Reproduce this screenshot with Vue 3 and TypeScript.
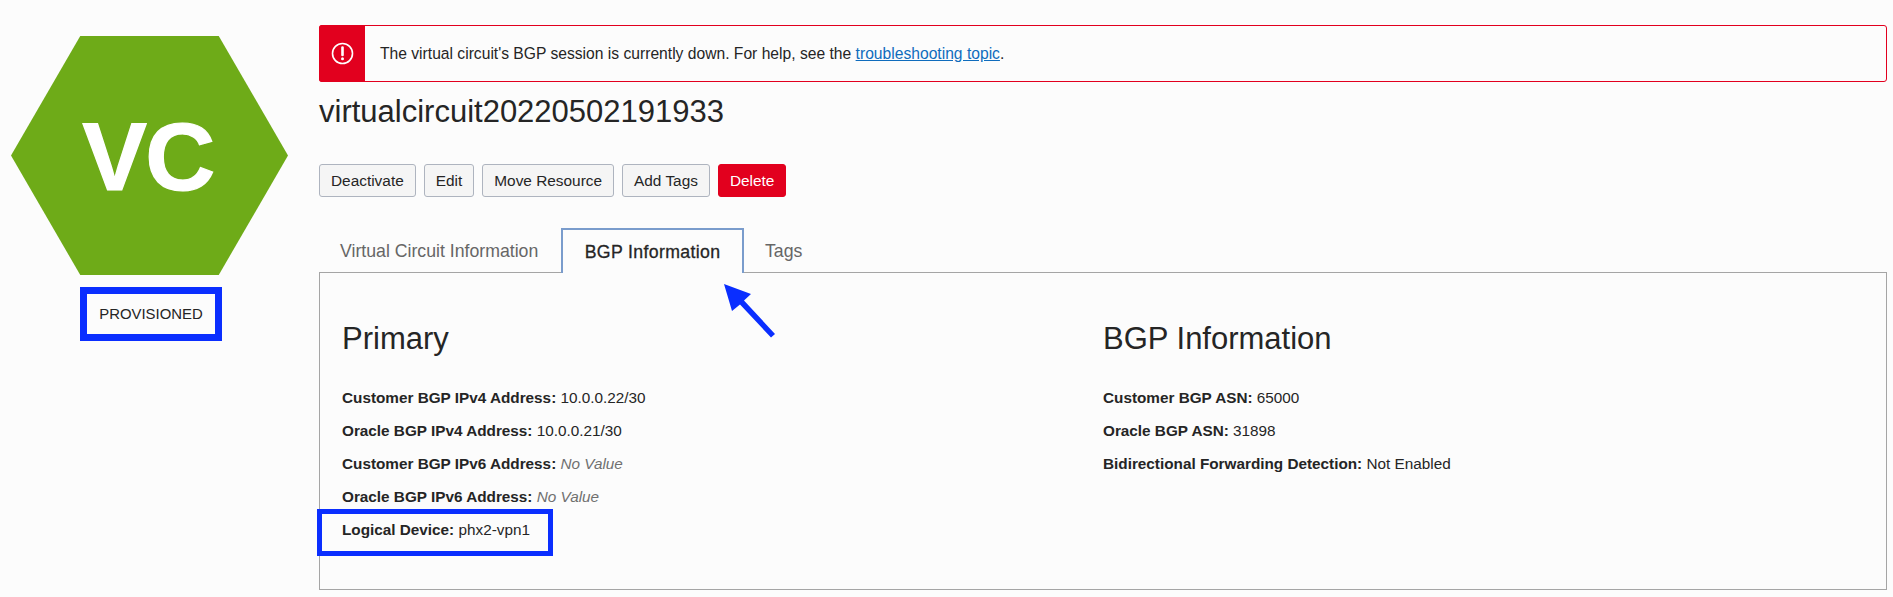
<script setup lang="ts">
interface Row { label: string; value: string; empty?: boolean; mark?: boolean }
const buttons: string[] = ['Deactivate', 'Edit', 'Move Resource', 'Add Tags']
const primary: Row[] = [
  { label: 'Customer BGP IPv4 Address:', value: '10.0.0.22/30' },
  { label: 'Oracle BGP IPv4 Address:', value: '10.0.0.21/30' },
  { label: 'Customer BGP IPv6 Address:', value: 'No Value', empty: true },
  { label: 'Oracle BGP IPv6 Address:', value: 'No Value', empty: true },
  { label: 'Logical Device:', value: 'phx2-vpn1', mark: true },
]
const bgp: Row[] = [
  { label: 'Customer BGP ASN:', value: '65000' },
  { label: 'Oracle BGP ASN:', value: '31898' },
  { label: 'Bidirectional Forwarding Detection:', value: 'Not Enabled' },
]
</script>

<template>
  <div class="page">
    <aside class="side">
      <div class="hex">VC</div>
      <div class="state">PROVISIONED</div>
    </aside>
    <main class="main">
      <div class="alert">
        <div class="alert-icon">
          <svg width="23" height="23" viewBox="0 0 23 23" fill="none">
            <circle cx="11.5" cy="11.5" r="10" stroke="#fff" stroke-width="1.6" />
            <path d="M11.5 5.5v7.5" stroke="#fff" stroke-width="2.6" stroke-linecap="round" />
            <circle cx="11.5" cy="16.8" r="1.5" fill="#fff" />
          </svg>
        </div>
        <p class="alert-text">The virtual circuit's BGP session is currently down. For help, see the <a class="link">troubleshooting topic</a>.</p>
      </div>
      <h1 class="title">virtualcircuit20220502191933</h1>
      <div class="actions">
        <button v-for="b in buttons" :key="b" class="btn">{{ b }}</button>
        <button class="btn danger">Delete</button>
      </div>
      <div class="tabs">
        <div class="tab first">Virtual Circuit Information</div>
        <div class="tab active">BGP Information</div>
        <div class="tab">Tags</div>
      </div>
      <section class="panel">
        <svg class="arrow" width="60" height="60" viewBox="0 0 60 60">
          <path d="M1 1 L28 11 L21 17.5 L52 51 L48 54.500 L17 21.500 L9 28 Z" fill="#0a2eff" />
        </svg>
        <div class="col">
          <h2 class="heading">Primary</h2>
          <div v-for="r in primary" :key="r.label" class="row" :class="{ marked: r.mark }">
            <b class="label">{{ r.label }}</b> <span :class="{ empty: r.empty }">{{ r.value }}</span>
          </div>
        </div>
        <div class="col">
          <h2 class="heading">BGP Information</h2>
          <div v-for="r in bgp" :key="r.label" class="row">
            <b class="label">{{ r.label }}</b> <span>{{ r.value }}</span>
          </div>
        </div>
      </section>
    </main>
  </div>
</template>

<style>
html, body { background: #fcfcfc; }
</style>

<style scoped>
.page {
  display: flex;
  width: 1893px;
  height: 597px;
  overflow: hidden;
  box-sizing: border-box;
  padding-top: 25px;
  background: #fcfcfc;
  color: #252525;
  font-family: "Liberation Sans", Arial, sans-serif;
}
.side {
  width: 319px;
  flex: none;
  display: flex;
  flex-direction: column;
  padding: 11px 0 0 11px;
  box-sizing: border-box;
}
.hex {
  width: 277px;
  height: 239px;
  background: #6eab18;
  clip-path: polygon(25% 0, 75% 0, 100% 50%, 75% 100%, 25% 100%, 0 50%);
  display: flex;
  align-items: center;
  justify-content: center;
  color: #fff;
  font-size: 97px;
  font-weight: 700;
  letter-spacing: -1.5px;
  -webkit-text-stroke: 1.2px #fff;
  padding: 3px 3px 0 0;
  box-sizing: border-box;
}
.state {
  width: 142px;
  height: 54px;
  margin: 12px 0 0 69px;
  border: 7px solid #0a2eff;
  box-sizing: border-box;
  display: flex;
  align-items: center;
  justify-content: center;
  font-size: 14.9px;
}
.main {
  width: 1568px;
  flex: none;
}
.alert {
  height: 57px;
  display: flex;
  align-items: center;
  border: 1px solid #e2001e;
  border-radius: 3px;
  box-sizing: border-box;
}
.alert-icon {
  width: 46px;
  align-self: stretch;
  margin: -1px 0 -1px -1px;
  background: #e2001e;
  border-radius: 3px 0 0 3px;
  display: flex;
  align-items: center;
  justify-content: center;
}
.alert-text {
  margin: 0 0 0 15px;
  font-size: 15.65px;
}
.link {
  color: #0f6cbd;
  text-decoration: underline;
}
.title {
  margin: 10px 0 0;
  font-size: 31px;
  line-height: 40px;
  font-weight: 400;
}
.actions {
  display: flex;
  gap: 8px;
  margin-top: 32px;
}
.btn {
  height: 33px;
  padding: 0 11px;
  border: 1px solid #aeb4bf;
  border-radius: 3px;
  background: #f5f5f5;
  color: #252525;
  font: 400 15.4px "Liberation Sans", Arial, sans-serif;
}
.danger {
  background: #e2001e;
  border-color: #e2001e;
  color: #fff;
}
.tabs {
  display: flex;
  margin-top: 31px;
  height: 45px;
  position: relative;
  z-index: 1;
}
.tab {
  padding: 0 21px;
  line-height: 47px;
  font-size: 17.7px;
  color: #666;
}
.first {
  width: 242px;
  box-sizing: border-box;
  white-space: nowrap;
}
.active {
  width: 183px;
  border: 2px solid #7a9ccc;
  border-bottom: 0;
  background: #fcfcfc;
  color: #252525;
  padding: 0;
  text-align: center;
  line-height: 45px;
  height: 45px;
  box-sizing: border-box;
  letter-spacing: 0.35px;
  -webkit-text-stroke: 0.3px #252525;
}
.panel {
  position: relative;
  display: flex;
  height: 318px;
  box-sizing: border-box;
  margin-top: -1px;
  border: 1px solid #a5a5a5;
  padding: 46px 22px 0;
}
.arrow {
  position: absolute;
  left: 403px;
  top: 10px;
}
.col {
  width: 761px;
  flex: none;
}
.heading {
  margin: 0 0 22px;
  font-size: 31px;
  line-height: 40px;
  font-weight: 400;
}
.row {
  height: 33px;
  line-height: 33px;
  font-size: 15.3px;
}
.label {
  font-weight: 700;
}
.empty {
  font-style: italic;
  color: #707070;
}
.marked {
  position: relative;
}
.marked::after {
  content: "";
  position: absolute;
  left: -25px;
  top: -4px;
  width: 236px;
  height: 47px;
  border: 5px solid #0a2eff;
  box-sizing: border-box;
}
</style>
